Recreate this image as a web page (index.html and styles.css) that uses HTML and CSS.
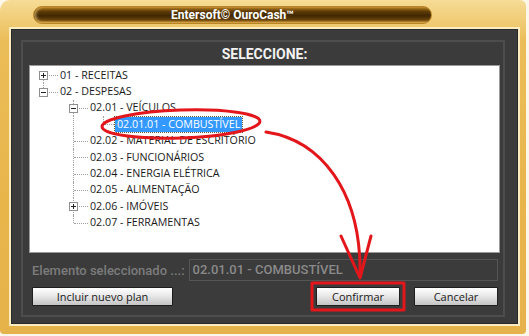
FILE: index.html
```html
<!DOCTYPE html>
<html lang="pt">
<head>
    <meta charset="UTF-8">
    <title>Entersoft OuroCash - Seleccione</title>
    <link rel="stylesheet" href="styles.css">
</head>
<body>
    <div class="window">
        <div class="titlebar">
            <div class="title-pill">Entersoft© OuroCash™</div>
        </div>
        <div class="panel">
            <div class="section">
                <div class="heading">SELECCIONE:</div>
                <div class="tree">
                    <div class="row">
                        <span class="joint start"><span class="toggle plus"></span></span>
                        <span class="label">01 - RECEITAS</span>
                    </div>
                    <div class="row">
                        <span class="joint end"><span class="toggle"></span></span>
                        <span class="label">02 - DESPESAS</span>
                    </div>
                    <div class="row">
                        <span class="indent"></span>
                        <span class="joint mid"><span class="toggle"></span></span>
                        <span class="label">02.01 - VEÍCULOS</span>
                    </div>
                    <div class="row">
                        <span class="indent"></span>
                        <span class="indent pass"></span>
                        <span class="joint end"></span>
                        <span class="label selected">02.01.01 - COMBUSTÍVEL</span>
                    </div>
                    <div class="row">
                        <span class="indent"></span>
                        <span class="joint mid"></span>
                        <span class="label">02.02 - MATERIAL DE ESCRITÓRIO</span>
                    </div>
                    <div class="row">
                        <span class="indent"></span>
                        <span class="joint mid"></span>
                        <span class="label">02.03 - FUNCIONÁRIOS</span>
                    </div>
                    <div class="row">
                        <span class="indent"></span>
                        <span class="joint mid"></span>
                        <span class="label">02.04 - ENERGIA ELÉTRICA</span>
                    </div>
                    <div class="row">
                        <span class="indent"></span>
                        <span class="joint mid"></span>
                        <span class="label">02.05 - ALIMENTAÇÃO</span>
                    </div>
                    <div class="row">
                        <span class="indent"></span>
                        <span class="joint mid"><span class="toggle plus"></span></span>
                        <span class="label">02.06 - IMÓVEIS</span>
                    </div>
                    <div class="row">
                        <span class="indent"></span>
                        <span class="joint end"></span>
                        <span class="label">02.07 - FERRAMENTAS</span>
                    </div>
                </div>
                <div class="picked">
                    <span class="picked-label">Elemento seleccionado ...:</span>
                    <div class="picked-value">02.01.01 - COMBUSTÍVEL</div>
                </div>
                <div class="actions">
                    <button class="btn btn-wide">Incluir nuevo plan</button>
                    <div class="actions-right">
                        <button class="btn">Confirmar</button>
                        <button class="btn">Cancelar</button>
                    </div>
                </div>
            </div>
        </div>

        <!-- red annotations drawn over the dialog -->
        <svg class="marks" width="529" height="336" viewBox="0 0 529 336">
            <ellipse cx="181" cy="124" rx="79" ry="14" transform="rotate(-2 181 124)" />
            <path d="M266 132 C320 140, 362 190, 360 277" />
            <path d="M341 236 L360 278 L371 236" />
            <rect x="312" y="283" width="92" height="27" />
        </svg>
    </div>
</body>
</html>
```

FILE: styles.css
```css
body {
    margin: 0;
    background: #fdf7ea;
}

.window {
    position: relative;
    width: 526px;
    height: 334px;
    box-sizing: border-box;
    padding: 0 8px 10px 11px;
    border-radius: 10px 6px 4px 4px;
    background: linear-gradient(180deg, #f6dc96 0%, #ebbd58 12%, #e8b54b 60%, #e6b24a 100%);
    font-family: Roboto, "Liberation Sans", sans-serif;
}

/* Title bar */
.titlebar {
    height: 29px;
    display: flex;
    align-items: flex-start;
}

.title-pill {
    margin: 6px 0 0 22px;
    width: 399px;
    height: 18px;
    box-sizing: border-box;
    border-radius: 9px;
    border: 1px solid #b98524;
    background: linear-gradient(180deg, #b07a1c 0%, #5e3b06 28%, #3f2803 55%, #6c450b 82%, #d7a03a 100%);
    box-shadow: inset 2px 0 3px rgba(255, 220, 140, 0.6);
    color: #fff;
    font-size: 12px;
    font-weight: bold;
    line-height: 16px;
    text-align: center;
}

/* Dark panel */
.panel {
    height: 295px;
    box-sizing: border-box;
    padding: 10px 12px 6px 9px;
    background: #3b3b3b;
    border: 1px solid #2a2a2a;
    box-shadow: 0 0 0 2px #fbecc2;
}

.section {
    height: 100%;
    box-sizing: border-box;
    border: 2px solid #4d4d4d;
    padding: 0 3px 0 6px;
}

.heading {
    height: 23px;
    line-height: 24px;
    text-align: center;
    color: #f2f2f2;
    font-size: 14px;
    font-weight: bold;
}

/* Tree view */
.tree {
    height: 188px;
    box-sizing: border-box;
    padding-top: 1px;
    background: #fff;
    border: 1px solid #9a9a9a;
    font-family: "Open Sans", "Noto Sans", sans-serif;
    font-size: 10.7px;
    color: #1a1a1a;
}

.row {
    display: flex;
    align-items: center;
    height: 16.4px;
}

.indent,
.joint {
    position: relative;
    flex: none;
    align-self: stretch;
}

.indent {
    width: 30px;
}

.joint {
    width: 28px;
}

.pass::before,
.joint::before {
    content: "";
    position: absolute;
    left: 13px;
    top: 0;
    bottom: 0;
    border-left: 1px dotted #a0a0a0;
}

.joint.start::before {
    top: 50%;
}

.joint.end::before {
    bottom: 50%;
}

.joint::after {
    content: "";
    position: absolute;
    left: 14px;
    right: 0;
    top: 50%;
    border-top: 1px dotted #a0a0a0;
}

.toggle {
    position: absolute;
    z-index: 1;
    left: 9px;
    top: 50%;
    width: 9px;
    height: 9px;
    margin-top: -4px;
    box-sizing: border-box;
    border: 1px solid #8f8f8f;
    background: #fff;
}

.toggle::before {
    content: "";
    position: absolute;
    left: 1px;
    right: 1px;
    top: 3px;
    height: 1px;
    background: #222;
}

.toggle.plus::after {
    content: "";
    position: absolute;
    top: 1px;
    bottom: 1px;
    left: 3px;
    width: 1px;
    background: #222;
}

.label {
    padding: 0 2px;
    line-height: 15px;
    white-space: nowrap;
}

.label.selected {
    margin-left: -3px;
    background: #3399ff;
    color: #fff;
    outline: 1px dotted #6b5a2a;
}

/* Selected element field */
.picked {
    display: flex;
    align-items: center;
    height: 22px;
    margin: 6px 2px 0 3px;
    gap: 4px;
}

.picked-label {
    color: #7b7b7b;
    font-size: 13px;
    font-weight: 500;
    white-space: nowrap;
}

.picked-value {
    flex: 1;
    height: 22px;
    box-sizing: border-box;
    border: 1px solid #555;
    padding-left: 3px;
    line-height: 20px;
    color: #8a8a8a;
    font-size: 13px;
    font-weight: 500;
}

/* Buttons */
.actions {
    display: flex;
    justify-content: space-between;
    margin: 6px 2px 0 3px;
}

.actions-right {
    display: flex;
    gap: 14px;
}

.btn {
    width: 84px;
    height: 19px;
    padding: 0;
    border: 1px solid #1e1e1e;
    border-radius: 1px;
    background: linear-gradient(180deg, #ffffff 0%, #e9e9e9 45%, #c4c4c4 100%);
    color: #1a1a1a;
    font-family: "Open Sans", "Noto Sans", sans-serif;
    font-size: 11px;
}

.btn-wide {
    width: 141px;
}

/* Annotation overlay */
.marks {
    position: absolute;
    left: 0;
    top: 0;
    fill: none;
    stroke: #e3161b;
    stroke-width: 3;
    stroke-linecap: round;
    stroke-linejoin: round;
    pointer-events: none;
}
```
